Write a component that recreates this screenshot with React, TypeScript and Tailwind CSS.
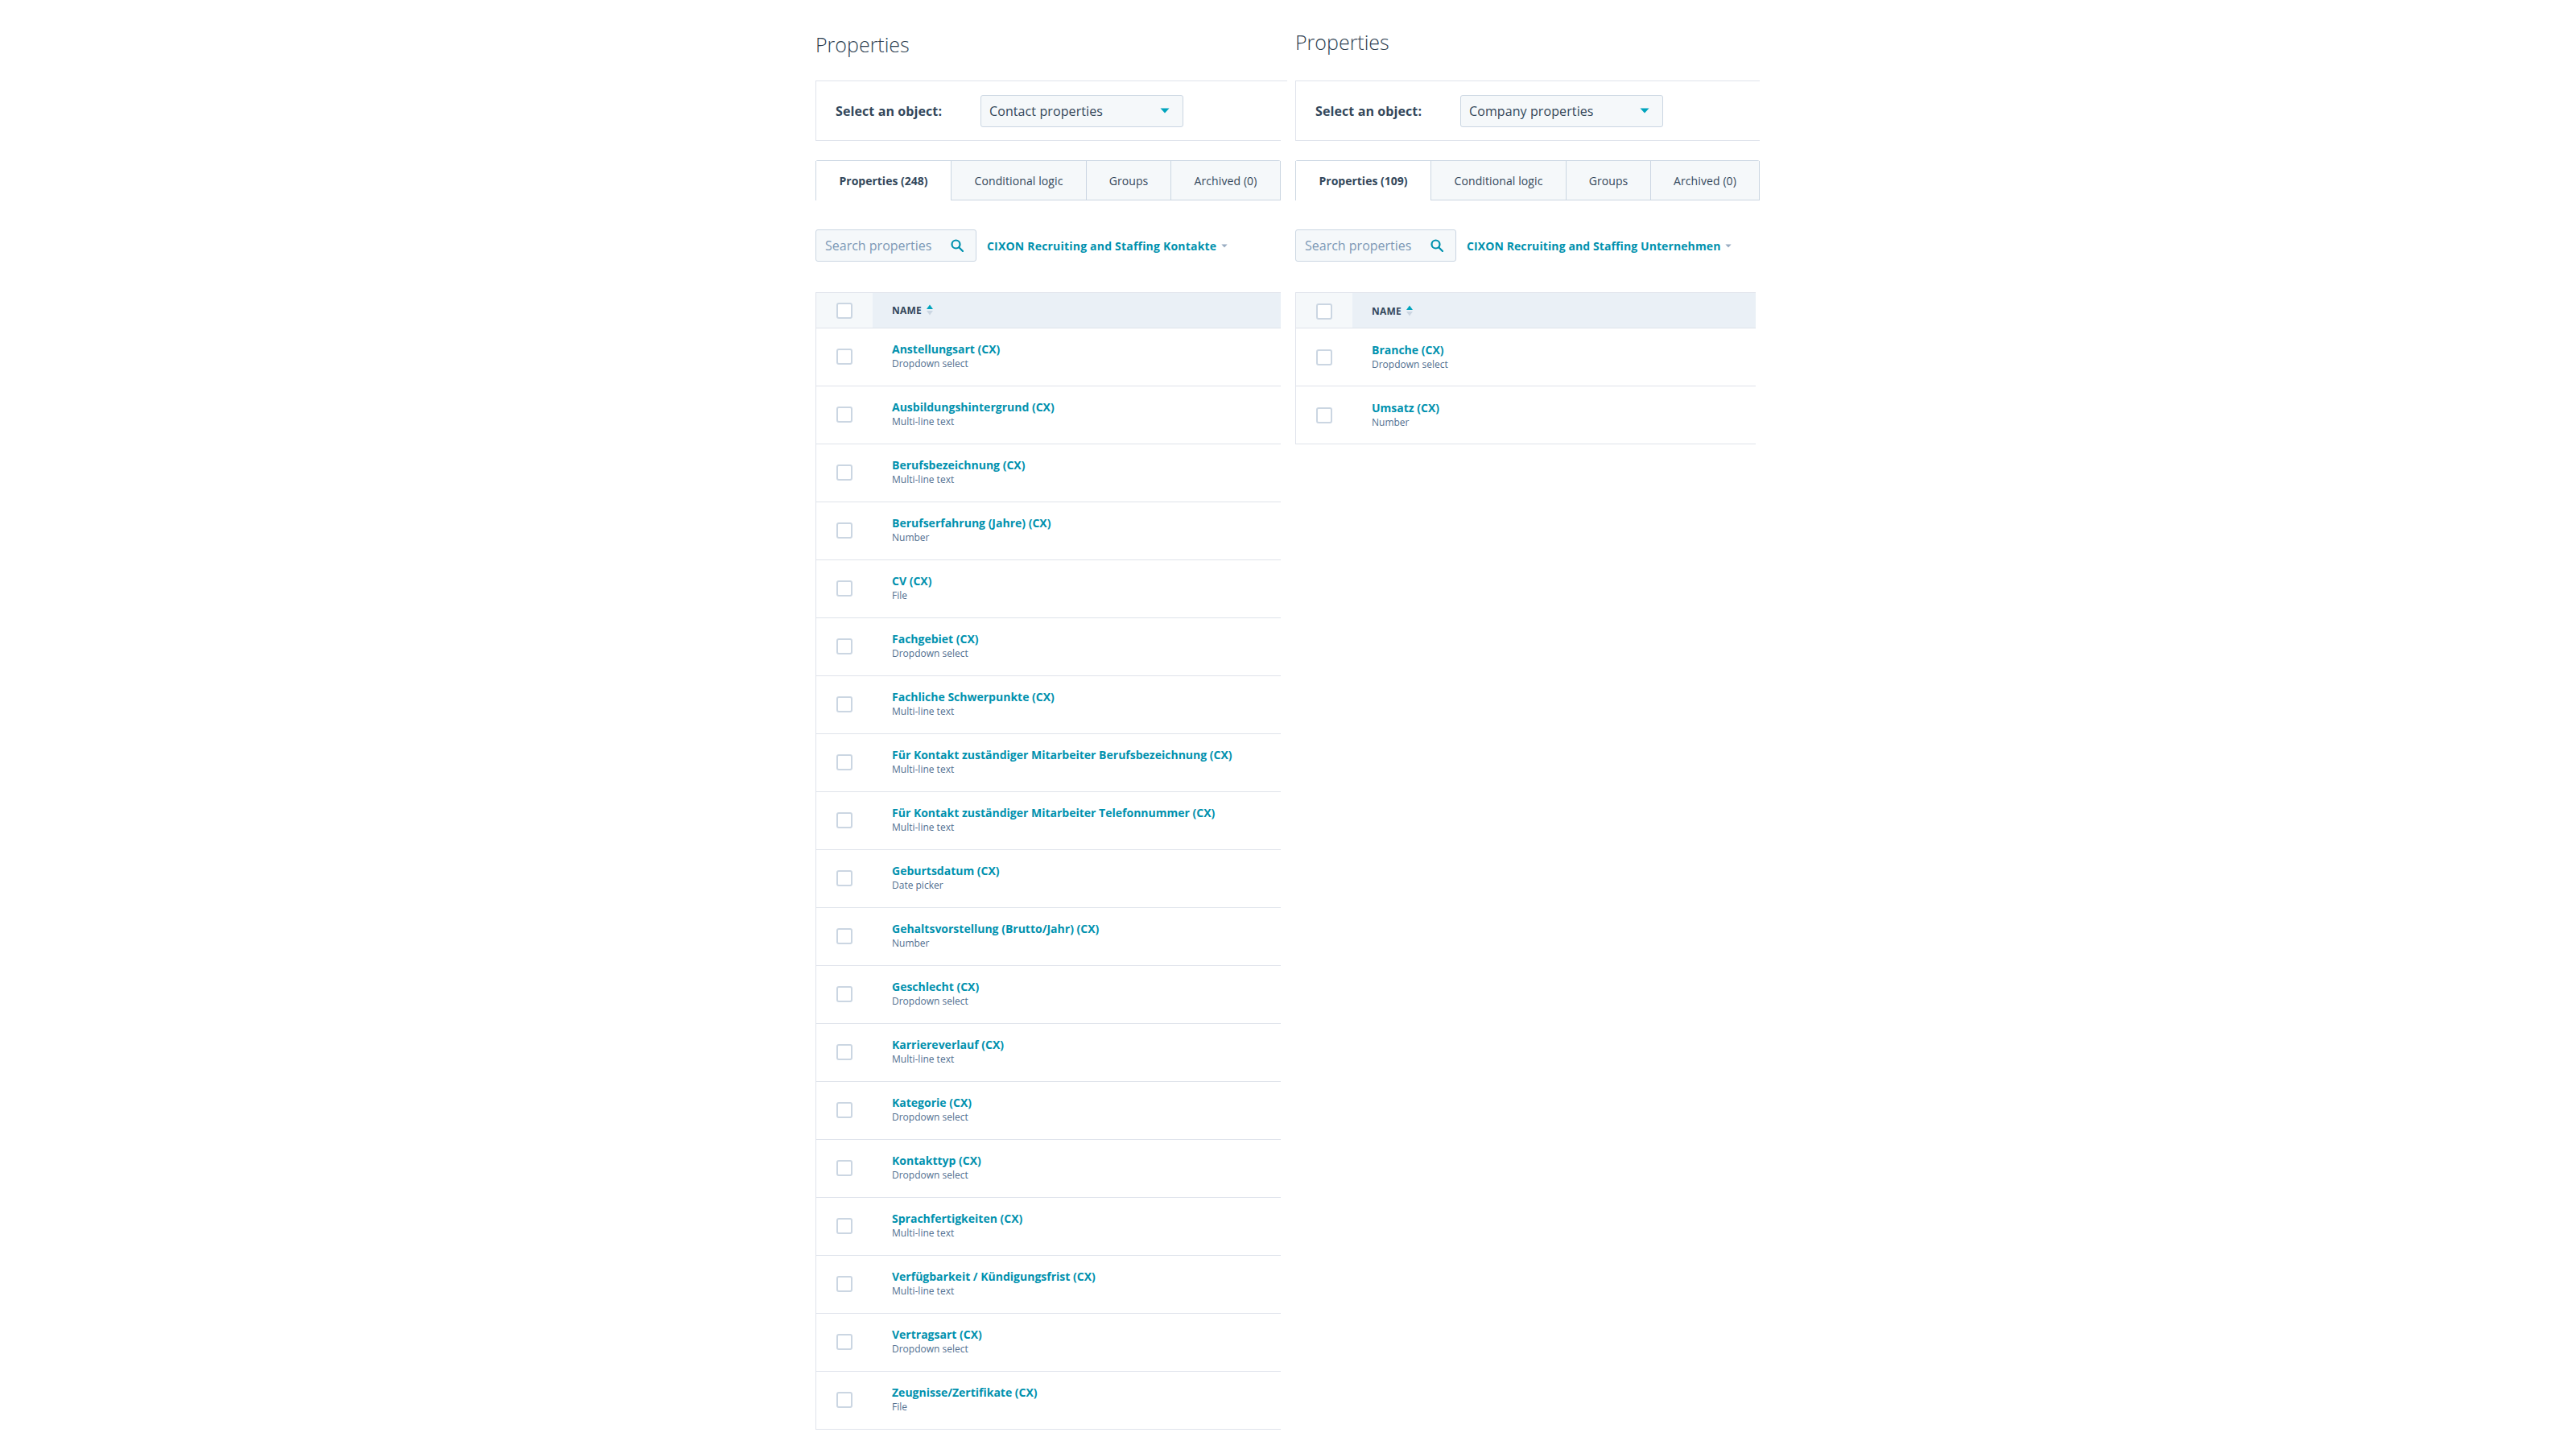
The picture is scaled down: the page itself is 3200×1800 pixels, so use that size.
import React from "react";

const leftRows: [string, string][] = [
  ["Anstellungsart (CX)", "Dropdown select"],
  ["Ausbildungshintergrund (CX)", "Multi-line text"],
  ["Berufsbezeichnung (CX)", "Multi-line text"],
  ["Berufserfahrung (Jahre) (CX)", "Number"],
  ["CV (CX)", "File"],
  ["Fachgebiet (CX)", "Dropdown select"],
  ["Fachliche Schwerpunkte (CX)", "Multi-line text"],
  ["Für Kontakt zuständiger Mitarbeiter Berufsbezeichnung (CX)", "Multi-line text"],
  ["Für Kontakt zuständiger Mitarbeiter Telefonnummer (CX)", "Multi-line text"],
  ["Geburtsdatum (CX)", "Date picker"],
  ["Gehaltsvorstellung (Brutto/Jahr) (CX)", "Number"],
  ["Geschlecht (CX)", "Dropdown select"],
  ["Karriereverlauf (CX)", "Multi-line text"],
  ["Kategorie (CX)", "Dropdown select"],
  ["Kontakttyp (CX)", "Dropdown select"],
  ["Sprachfertigkeiten (CX)", "Multi-line text"],
  ["Verfügbarkeit / Kündigungsfrist (CX)", "Multi-line text"],
  ["Vertragsart (CX)", "Dropdown select"],
  ["Zeugnisse/Zertifikate (CX)", "File"],
];
const rightRows: [string, string][] = [
  ["Branche (CX)", "Dropdown select"],
  ["Umsatz (CX)", "Number"],
];

function Check() {
  return <span className="block w-5 h-5 shrink-0 rounded-[3px] border-2 border-[#cbd6e2] bg-white" />;
}

function Caret({ className }: { className: string }) {
  return (
    <svg viewBox="0 0 12 7" className={className}>
      <path d="M0.5 0.5h11L6 6.5z" fill="currentColor" />
    </svg>
  );
}

function Column(props: {
  title: string;
  titleClass: string;
  option: string;
  tabLabel: string;
  filter: string;
  filterClass: string;
  rows: [string, string][];
  widthClass: string;
  tableClass: string;
  topRuleClass: string;
  headShift: string;
  cellShift: string;
}) {
  const tabs = [
    ["Conditional logic", "w-[168px]"],
    ["Groups", "w-[105px]"],
  ];
  return (
    <div className={`flex flex-col ${props.widthClass}`}>
      <div className="h-[100px] flex flex-col justify-start">
        <h1 className={`text-[#2d3e50] text-[25px] leading-[30px] font-light ${props.titleClass}`}>
          {props.title}
        </h1>
      </div>
      <div className={`h-px bg-[#dfe3eb] ${props.topRuleClass}`} />
      <div className="h-[74px] flex items-center border-l border-b border-[#dfe3eb] pl-[24px]">
        <span className="w-[180px] shrink-0 text-[16px] font-bold tracking-[0.1px] text-[#33475b]">Select an object:</span>
        <div className="w-[252px] h-[40px] flex items-center justify-between rounded-[3px] border border-[#cbd6e2] bg-[#f5f8fa] pl-[10px] pr-[16px]">
          <span className="text-[16px] tracking-[0.1px] text-[#33475b]">{props.option}</span>
          <Caret className="w-3 h-[7px] text-[#00a4bd]" />
        </div>
      </div>
      <div className="mt-[24px] h-[50px] flex rounded-t-[3px] border-t border-[#cbd6e2] text-[14px] text-[#33475b]">
        <div className="w-[168px] flex items-center justify-center border-l border-[#cbd6e2] bg-white font-bold">
          {props.tabLabel}
        </div>
        {tabs.map(([t, w]) => (
          <div
            key={t}
            className={`${w} flex items-center justify-center border-l border-b border-[#cbd6e2] bg-[#f5f8fa] tracking-[0.1px]`}
          >
            {t}
          </div>
        ))}
        <div className="flex-1 flex items-center justify-center border-x border-b border-[#cbd6e2] bg-[#f5f8fa] tracking-[0.1px]">
          Archived (0)
        </div>
      </div>
      <div className="mt-[36px] flex items-center">
        <div className="w-[200px] h-[40px] flex items-center justify-between rounded-[3px] border border-[#cbd6e2] bg-[#f5f8fa] pl-[11px] pr-[15px]">
          <span className="text-[16px] text-[#7c98b6]">Search properties</span>
          <svg viewBox="0 0 16 16" className="w-4 h-4 text-[#0091ae]" fill="none" stroke="currentColor" strokeWidth="2.2">
            <circle cx="6.5" cy="6.5" r="5" />
            <path d="M10.2 10.2L15 15" strokeLinecap="round" />
          </svg>
        </div>
        <span className={`ml-[13px] text-[14px] font-bold text-[#0091ae] ${props.filterClass}`}>{props.filter}</span>
        <Caret className="ml-[6px] w-2 h-[5px] text-[#99acc2]" />
      </div>
      <div className={`mt-[38px] ${props.tableClass}`}>
        <div className="h-[45px] flex items-stretch border-t border-b border-l border-[#dfe3eb]">
          <div className={`w-[70px] flex items-center pl-[25px] bg-[#f5f8fa] ${props.headShift}`}>
            <Check />
          </div>
          <div className={`flex-1 flex items-center pl-[24px] bg-[#eaf0f6] ${props.headShift}`}>
            <span className="text-[12px] font-bold tracking-[0.2px] text-[#33475b]">NAME</span>
            <svg viewBox="0 0 8 14" className="ml-[6px] -mt-[2px] w-2 h-[14px]">
              <path d="M4 0.5L8 6H0z" fill="#00a4bd" />
              <path d="M4 13.5L8 8H0z" fill="#cbd6e2" />
            </svg>
          </div>
        </div>
        {props.rows.map(([name, sub]) => (
          <div key={name} className={`h-[72px] flex items-center border-l border-b border-[#dfe3eb] ${props.cellShift}`}>
            <div className="w-[70px] pl-[25px] -mt-[1px]">
              <Check />
            </div>
            <div className="pl-[24px] flex flex-col -mt-[1px]">
              <span className="text-[14px] leading-[18px] font-bold text-[#0091ae]">{name}</span>
              <span className="text-[12px] leading-[18px] text-[#516f90]">{sub}</span>
            </div>
          </div>
        ))}
      </div>
    </div>
  );
}

export default function App() {
  return (
    <div
      className="w-[3200px] h-[1800px] bg-white flex gap-[18px] pl-[1013px] overflow-hidden"
      style={{ fontFamily: '"Open Sans", "Noto Sans", sans-serif' }}
    >
      <Column
        title="Properties"
        titleClass="mt-[40px]"
        option="Contact properties"
        tabLabel="Properties (248)"
        filter="CIXON Recruiting and Staffing Kontakte"
        filterClass="tracking-[0.2px]"
        rows={leftRows}
        widthClass="w-[578px]"
        tableClass="w-[578px]"
        topRuleClass="w-[586px]"
        headShift="pt-[1px]"
        cellShift=""
      />
      <Column
        title="Properties"
        titleClass="mt-[37px]"
        option="Company properties"
        tabLabel="Properties (109)"
        filter="CIXON Recruiting and Staffing Unternehmen"
        filterClass="tracking-[0.1px]"
        rows={rightRows}
        widthClass="w-[577px]"
        tableClass="w-[572px]"
        topRuleClass="w-[577px]"
        headShift="pt-[2px]"
        cellShift="pt-[2px]"
      />
    </div>
  );
}
